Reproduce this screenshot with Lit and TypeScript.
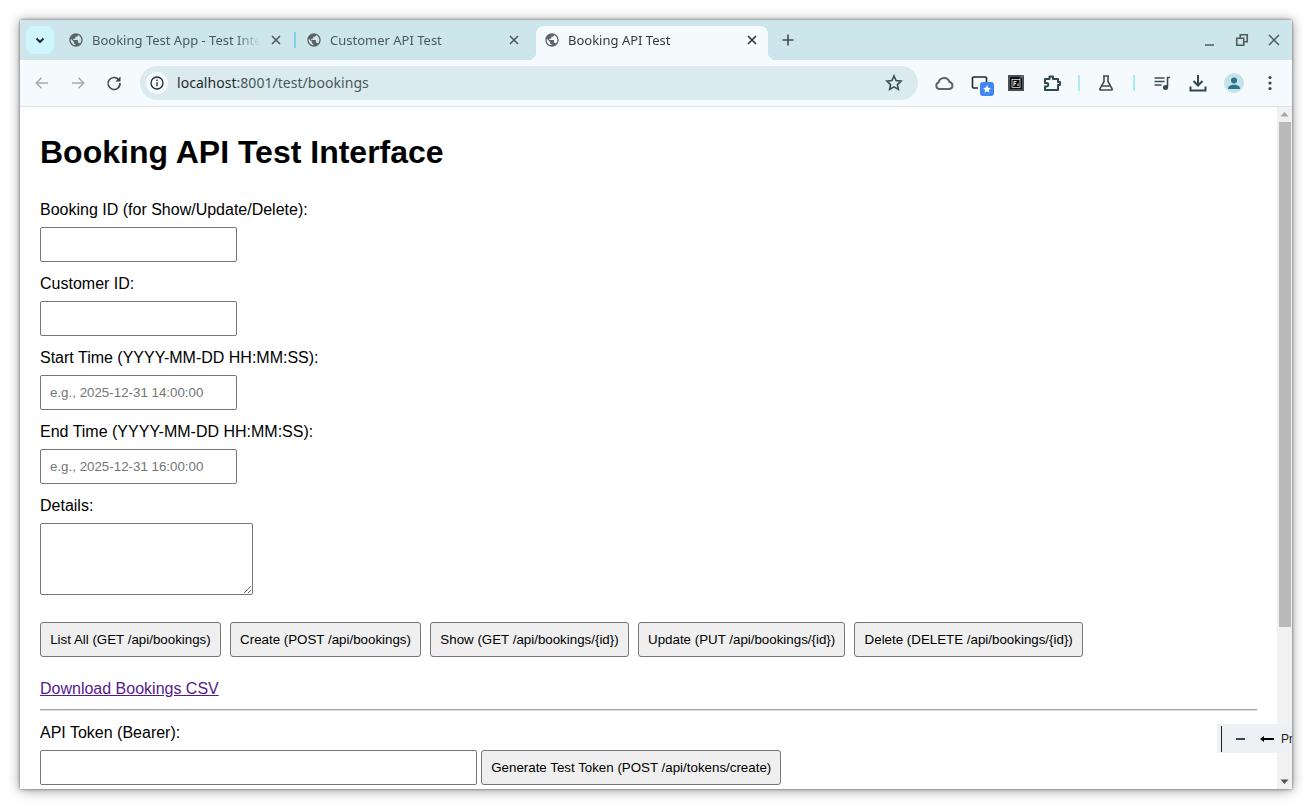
import { LitElement, html, css, svg } from 'lit';
import { customElement } from 'lit/decorators.js';

const globe = svg`<path d="M12 2C6.48 2 2 6.48 2 12s4.48 10 10 10 10-4.48 10-10S17.52 2 12 2zm-1 17.93c-3.95-.49-7-3.85-7-7.93 0-.62.08-1.21.21-1.79L9 15v1c0 1.1.9 2 2 2v1.93zm6.9-2.54c-.26-.81-1-1.39-1.9-1.39h-1v-3c0-.55-.45-1-1-1H8v-2h2c.55 0 1-.45 1-1V7h2c1.1 0 2-.9 2-2v-.41c2.93 1.19 5 4.06 5 7.41 0 2.08-.8 3.97-2.1 5.39z"/>`;

@customElement('browser-tab')
export class BrowserTab extends LitElement {
  static properties = {
    title: { type: String },
    active: { type: Boolean, reflect: true },
  };

  declare title: string;
  declare active: boolean;

  static styles = css`
    :host {
      display: flex;
      align-items: center;
      gap: 8px;
      position: relative;
      width: 232px;
      height: 28px;
      padding: 0 8px;
      box-sizing: border-box;
      color: #4b5a60;
      font: 13px 'Noto Sans', sans-serif;
    }
    :host([active]) {
      height: 40px;
      padding-bottom: 12px;
      background: #f5fafd;
      border-radius: 8px 8px 0 0;
      color: #2f3b40;
      z-index: 1;
    }
    :host([active])::before,
    :host([active])::after {
      content: '';
      position: absolute;
      bottom: 6px;
      width: 8px;
      height: 8px;
    }
    :host([active])::before {
      left: -8px;
      background: radial-gradient(circle at 0 0, transparent 8px, #f5fafd 8.5px);
    }
    :host([active])::after {
      right: -8px;
      background: radial-gradient(circle at 100% 0, transparent 8px, #f5fafd 8.5px);
    }
    .fav {
      width: 16px;
      height: 16px;
      fill: #5b6468;
      flex: none;
    }
    .title {
      flex: 1;
      overflow: hidden;
      white-space: nowrap;
      -webkit-mask-image: linear-gradient(to right, #000 calc(100% - 24px), transparent);
      mask-image: linear-gradient(to right, #000 calc(100% - 24px), transparent);
    }
    .close {
      width: 16px;
      height: 16px;
      flex: none;
      stroke: #4a5559;
      stroke-width: 1.5;
      fill: none;
    }
    :host([active]) .close {
      stroke: #2f3b40;
      stroke-width: 1.7;
    }
  `;

  render() {
    return html`
      <svg class="fav" viewBox="0 0 24 24">${globe}</svg>
      <span class="title">${this.title}</span>
      <svg class="close" viewBox="0 0 16 16"><path d="M4 4l8 8M12 4l-8 8" /></svg>
    `;
  }
}

@customElement('app-root')
export class AppRoot extends LitElement {
  static styles = css`
    :host {
      display: block;
      width: 1312px;
      height: 808px;
      padding: 20px 20px 19px;
      box-sizing: border-box;
      background: #fff;
      overflow: hidden;
    }
    .window {
      display: flex;
      flex-direction: column;
      height: 769px;
      background: #fff;
      box-shadow: 0 0 3px rgba(0, 0, 0, 0.5), 0 1px 12px rgba(0, 0, 0, 0.4);
    }

    /* tab strip */
    .strip {
      display: flex;
      align-items: flex-start;
      flex: none;
      height: 40px;
      padding: 6px 0 0 6px;
      box-sizing: border-box;
      background: #cde6eb;
    }
    .tab-menu {
      display: grid;
      place-items: center;
      flex: none;
      width: 28px;
      height: 28px;
      margin-right: 6px;
      border-radius: 8px;
      background: #cff5fd;
    }
    .tab-menu svg {
      width: 16px;
      height: 16px;
      fill: none;
      stroke: #1d2a30;
      stroke-width: 2;
    }
    .tab-gap {
      flex: none;
      width: 6px;
      height: 28px;
      display: flex;
      align-items: center;
      justify-content: center;
    }
    .tab-gap i {
      width: 2px;
      height: 16px;
      background: #7fd3e6;
    }
    .new-tab {
      width: 16px;
      height: 16px;
      margin: 6px 0 0 12px;
      flex: none;
      stroke: #3f4d52;
      stroke-width: 1.6;
      fill: none;
    }
    .win-controls {
      display: flex;
      margin-left: auto;
      margin-right: 10px;
      gap: 16px;
      height: 28px;
      align-items: center;
    }
    .win-controls svg {
      width: 16px;
      height: 16px;
      fill: none;
      stroke: #4f5a5e;
      stroke-width: 1.5;
    }
    .win-controls .restore {
      width: 14px;
      height: 14px;
      margin-left: 1px;
      margin-right: 1px;
      stroke-width: 1.8;
    }

    /* toolbar */
    .toolbar {
      display: flex;
      align-items: center;
      flex: none;
      height: 47px;
      padding: 0 4px 1px 4px;
      box-sizing: border-box;
      background: #f5fafd;
      border-bottom: 1px solid #d9e4e8;
      border-radius: 8px 8px 0 0;
    }
    .tool {
      display: grid;
      place-items: center;
      flex: none;
      width: 36px;
      height: 36px;
      position: relative;
    }
    .tool svg {
      width: 20px;
      height: 20px;
      fill: none;
      stroke: #3f4d52;
      stroke-width: 1.6;
    }
    .tool.off svg {
      stroke: #a5adb0;
    }
    .tool .solid {
      fill: #33474e;
      stroke: none;
    }
    .tool .heavy {
      stroke-width: 2;
      stroke: #33474e;
    }
    .tool .cloud {
      stroke-width: 2;
      stroke: #5b666a;
    }
    .tool .cast {
      stroke: #1f2a2e;
    }
    .omnibox {
      display: flex;
      align-items: center;
      flex: none;
      width: 778px;
      height: 34px;
      margin: 0 8px 0 8px;
      padding: 0 6px;
      box-sizing: border-box;
      border-radius: 17px;
      background: #daeaef;
      font: 14px 'Noto Sans', sans-serif;
      letter-spacing: 0.04px;
      color: #4a575c;
    }
    .site-info {
      display: grid;
      place-items: center;
      flex: none;
      width: 22px;
      height: 22px;
      margin-right: 9px;
      border-radius: 50%;
      background: #f5fafd;
    }
    .site-info svg {
      width: 16px;
      height: 16px;
      fill: none;
      stroke: #1f2a2e;
      stroke-width: 1.3;
    }
    .host {
      color: #1f2a2e;
    }
    .star {
      width: 20px;
      height: 20px;
      margin-left: auto;
      margin-right: 8px;
      fill: none;
      stroke: #3f4d52;
      stroke-width: 1.6;
    }
    .tool-sep {
      flex: none;
      width: 2px;
      height: 16px;
      margin: 0 8px;
      background: #a8ecfb;
    }
    .tool-sep.wide {
      margin: 0 9px;
    }
    .badge {
      position: absolute;
      left: 18px;
      top: 17px;
      display: grid;
      place-items: center;
      width: 14px;
      height: 14px;
      border-radius: 3px;
      background: #4285f4;
    }
    .badge svg {
      width: 10px;
      height: 10px;
      fill: #fff;
      stroke: none;
    }
    .avatar {
      display: grid;
      place-items: center;
      width: 20px;
      height: 20px;
      border-radius: 50%;
      background: #c5e3e8;
    }
    .avatar svg {
      width: 16px;
      height: 16px;
      fill: #2b7489;
      stroke: none;
    }

    /* page */
    .body {
      display: flex;
      flex: 1;
      min-height: 0;
      position: relative;
      overflow: hidden;
    }
    .page {
      flex: 1;
      min-width: 0;
      padding: 27px 20px 0;
      font: 16px 'Liberation Sans', Arial, sans-serif;
      color: #000;
    }
    h1 {
      margin: 0 0 30px;
      font-size: 32px;
      font-weight: bold;
      line-height: 37px;
    }
    .group {
      margin-bottom: 13px;
    }
    label {
      display: block;
      line-height: 18px;
      margin-bottom: 8px;
    }
    input,
    textarea {
      display: block;
      box-sizing: border-box;
      width: 197px;
      height: 35px;
      padding: 0 9px;
      border: 1px solid #767676;
      border-radius: 2px;
      background: #fff;
      font: 13.3333px 'Liberation Sans', Arial, sans-serif;
    }
    input::placeholder {
      color: #757575;
    }
    textarea {
      width: 213px;
      height: 72px;
    }
    .actions {
      display: flex;
      gap: 9px;
      margin-top: 27px;
    }
    button {
      flex: none;
      height: 35px;
      padding: 0 9.2px;
      border: 1px solid #767676;
      border-radius: 3px;
      background: #efefef;
      color: #000;
      font: 13.3333px 'Liberation Sans', Arial, sans-serif;
    }
    .csv {
      display: block;
      margin-top: 23px;
      line-height: 18px;
      color: #551a8b;
      text-decoration: underline;
    }
    hr {
      margin: 11px 0 13px;
      height: 0;
      border: 0;
      border-top: 1px solid #a0a0a0;
      border-bottom: 1px solid #dcdcdc;
    }
    .token {
      display: flex;
      gap: 4px;
    }
    .token input {
      width: 437px;
    }

    /* scrollbar */
    .scrollbar {
      display: flex;
      flex-direction: column;
      align-items: center;
      flex: none;
      width: 15px;
      background: #f1f1f1;
    }
    .scrollbar svg {
      flex: none;
      width: 15px;
      height: 15px;
      fill: #a3a3a3;
    }
    .thumb {
      flex: none;
      width: 12px;
      height: 505px;
      background: #b9b9b9;
    }
    .scrollbar .down {
      margin-top: auto;
    }
    .scrollbar .down path {
      fill: #555;
    }

    /* extension panel sitting over the page edge */
    .dock {
      position: absolute;
      right: 0;
      top: 617px;
      display: flex;
      align-items: center;
      width: 75px;
      height: 29px;
      overflow: hidden;
      background: #eef0f3;
      font: 12px 'Liberation Sans', Arial, sans-serif;
      color: #222;
    }
    .dock i {
      flex: none;
      width: 1px;
      height: 26px;
      margin-left: 4px;
      background: #222;
    }
    .dock .minus {
      flex: none;
      width: 9px;
      height: 2px;
      margin-left: 14px;
      background: #33485a;
    }
    .dock svg {
      flex: none;
      width: 14px;
      height: 10px;
      margin-left: 15px;
      fill: #000;
    }
    .dock span {
      margin-left: 7px;
      white-space: nowrap;
    }
  `;

  render() {
    return html`
      <div class="window">
        <div class="strip">
          <div class="tab-menu">
            <svg viewBox="0 0 16 16"><path d="M4.5 6.5L8 10l3.5-3.5" /></svg>
          </div>
          <browser-tab title="Booking Test App - Test Interface"></browser-tab>
          <div class="tab-gap"><i></i></div>
          <browser-tab title="Customer API Test"></browser-tab>
          <div class="tab-gap"></div>
          <browser-tab active title="Booking API Test"></browser-tab>
          <svg class="new-tab" viewBox="0 0 16 16"><path d="M8 2.5v11M2.5 8h11" /></svg>
          <div class="win-controls">
            <svg viewBox="0 0 16 16"><path d="M3 13h9" /></svg>
            <svg class="restore" viewBox="0 0 16 16"><path d="M2 6h8v8H2zM6 6V2h8v8h-4" /></svg>
            <svg viewBox="0 0 16 16"><path d="M3 3l10 10M13 3L3 13" /></svg>
          </div>
        </div>

        <div class="toolbar">
          <div class="tool off">
            <svg viewBox="0 0 20 20"><path d="M16 10H4.5M9.5 4.8L4.3 10l5.2 5.2" /></svg>
          </div>
          <div class="tool off">
            <svg viewBox="0 0 20 20"><path d="M4 10h11.5M10.5 4.8l5.2 5.2-5.2 5.2" /></svg>
          </div>
          <div class="tool">
            <svg viewBox="0 0 20 20">
              <path d="M15.2 7.5A6 6 0 1 0 16 10" />
              <path class="solid" d="M16.5 3.5v5h-5z" />
            </svg>
          </div>
          <div class="omnibox">
            <div class="site-info">
              <svg viewBox="0 0 16 16">
                <circle cx="8" cy="8" r="6" />
                <path d="M8 7.2v4M8 4.6v1.4" />
              </svg>
            </div>
            <span><span class="host">localhost</span>:8001/test/bookings</span>
            <svg class="star" viewBox="0 0 20 20">
              <path d="M10 3l2.1 4.6 5 .6-3.7 3.4 1 4.9L10 13.9l-4.4 2.6 1-4.9-3.7-3.4 5-.6z" />
            </svg>
          </div>
          <div class="tool">
            <svg class="cloud" viewBox="0 0 20 20">
              <path d="M5.5 16a3.4 3.4 0 0 1-.9-6.6 5.6 5.6 0 0 1 10.8-.5 3.6 3.6 0 0 1 .1 7.1z" />
            </svg>
          </div>
          <div class="tool">
            <svg class="cast" viewBox="0 0 20 20">
              <path d="M8 15H3.5a1 1 0 0 1-1-1V5a1 1 0 0 1 1-1h12a1 1 0 0 1 1 1v5" />
            </svg>
            <div class="badge">
              <svg viewBox="0 0 20 20">
                <path d="M10 2l2.4 5.4 5.6.6-4.2 3.8 1.2 5.7L10 14.6l-5 2.9 1.2-5.7L2 8l5.6-.6z" />
              </svg>
            </div>
          </div>
          <div class="tool">
            <svg viewBox="0 0 20 20">
              <rect x="2" y="2" width="16" height="16" fill="#46525a" stroke="none" />
              <rect x="4" y="4" width="12" height="12" fill="#111" stroke="none" />
              <rect x="6" y="6.5" width="8" height="8" fill="none" stroke="#ddd" stroke-width="0.8" />
              <path d="M8 13V8.5h2.5M8 10.5h2M12 10.5V13" stroke="#eee" stroke-width="1" />
              <path d="M14 5.5l3-3" stroke="#8fb4e8" stroke-width="1" />
            </svg>
          </div>
          <div class="tool">
            <svg class="heavy" viewBox="0 0 20 20">
              <path d="M3 6h4.5V3.5H11V6h5v3h2v3h-2v5H3v-3.5h1.5a1.8 1.8 0 0 0 0-3.6H3z" stroke-linejoin="round" />
            </svg>
          </div>
          <div class="tool-sep"></div>
          <div class="tool">
            <svg viewBox="0 0 20 20">
              <path d="M7 3h6M8 3v5.5L3.8 16a.7.7 0 0 0 .6 1h11.2a.7.7 0 0 0 .6-1L12 8.5V3M6 13h8" />
            </svg>
          </div>
          <div class="tool-sep wide"></div>
          <div class="tool">
            <svg viewBox="0 0 20 20">
              <path d="M2.5 5h10M2.5 8.5h10M2.5 12h7" />
              <path d="M15.5 14.5V4.5H18" />
              <circle class="solid" cx="13.5" cy="14.5" r="2.5" />
            </svg>
          </div>
          <div class="tool">
            <svg class="heavy" viewBox="0 0 20 20">
              <path d="M10 2V12.5M5.5 8L10 12.5 14.5 8M2.5 13.5v4h15v-4" />
            </svg>
          </div>
          <div class="tool">
            <div class="avatar">
              <svg viewBox="0 0 16 16">
                <circle cx="8" cy="5.4" r="3" />
                <path d="M2 14c0-3 3-4.2 6-4.2s6 1.2 6 4.2z" />
              </svg>
            </div>
          </div>
          <div class="tool">
            <svg viewBox="0 0 20 20">
              <circle class="solid" cx="10" cy="4.5" r="1.6" />
              <circle class="solid" cx="10" cy="10" r="1.6" />
              <circle class="solid" cx="10" cy="15.5" r="1.6" />
            </svg>
          </div>
        </div>

        <div class="body">
          <div class="page">
            <h1>Booking API Test Interface</h1>
            <div class="group">
              <label>Booking ID (for Show/Update/Delete):</label>
              <input type="text" />
            </div>
            <div class="group">
              <label>Customer ID:</label>
              <input type="text" />
            </div>
            <div class="group">
              <label>Start Time (YYYY-MM-DD HH:MM:SS):</label>
              <input type="text" placeholder="e.g., 2025-12-31 14:00:00" />
            </div>
            <div class="group">
              <label>End Time (YYYY-MM-DD HH:MM:SS):</label>
              <input type="text" placeholder="e.g., 2025-12-31 16:00:00" />
            </div>
            <div class="group">
              <label>Details:</label>
              <textarea></textarea>
            </div>
            <div class="actions">
              <button>List All (GET /api/bookings)</button>
              <button>Create (POST /api/bookings)</button>
              <button>Show (GET /api/bookings/{id})</button>
              <button>Update (PUT /api/bookings/{id})</button>
              <button>Delete (DELETE /api/bookings/{id})</button>
            </div>
            <a class="csv" href="#">Download Bookings CSV</a>
            <hr />
            <label>API Token (Bearer):</label>
            <div class="token">
              <input type="text" />
              <button>Generate Test Token (POST /api/tokens/create)</button>
            </div>
          </div>
          <div class="scrollbar">
            <svg viewBox="0 0 15 15"><path d="M7.5 5l4 4.5h-8z" /></svg>
            <div class="thumb"></div>
            <svg class="down" viewBox="0 0 15 15"><path d="M7.5 10l4-4.5h-8z" /></svg>
          </div>
          <div class="dock">
            <i></i>
            <div class="minus"></div>
            <svg viewBox="0 0 14 10"><path d="M0 5l4-3v2h10v2H4v2z" /></svg>
            <span>Preview</span>
          </div>
        </div>
      </div>
    `;
  }
}
